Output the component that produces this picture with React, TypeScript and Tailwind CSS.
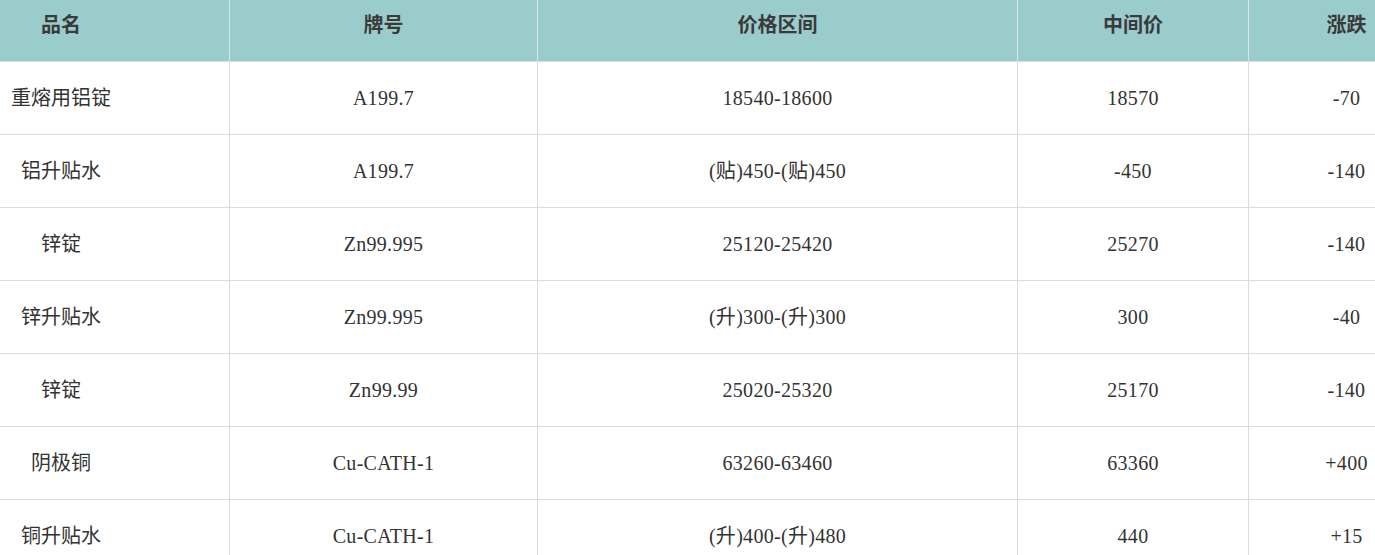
const rows = [
  ["重熔用铝锭", "A199.7", "18540-18600", "18570", "-70"],
  ["铝升贴水", "A199.7", "(贴)450-(贴)450", "-450", "-140"],
  ["锌锭", "Zn99.995", "25120-25420", "25270", "-140"],
  ["锌升贴水", "Zn99.995", "(升)300-(升)300", "300", "-40"],
  ["锌锭", "Zn99.99", "25020-25320", "25170", "-140"],
  ["阴极铜", "Cu-CATH-1", "63260-63460", "63360", "+400"],
  ["铜升贴水", "Cu-CATH-1", "(升)400-(升)480", "440", "+15"],
];

const cols = "grid grid-cols-[230px_308px_480px_231px_195px] w-[1444px]";

const App = () => {
  return (
    <div
      className="w-[1375px] h-[555px] overflow-hidden bg-white text-[20px] text-[#333]"
      style={{ fontFamily: '"Liberation Serif", "Noto Sans CJK SC", serif' }}
    >
      {/* HEADER */}
      <div className={`${cols} h-[62px] bg-[#9acccc] border-b border-[#dcdcdc] font-bold text-[#3a3a3a]`}>
        {["品名", "牌号", "价格区间", "中间价", "涨跌"].map((h, i) => (
          <div
            key={h}
            className={`flex ${i === 0 ? "justify-start" : "justify-center"} pt-[11px] leading-[28px] ${i < 4 ? "border-r border-[#d8e8e8]" : ""}`}
          >
            <span className={i === 0 ? "w-[122px] text-center" : ""}>{h}</span>
          </div>
        ))}
      </div>

      {/* BODY */}
      {rows.map((r, ri) => (
        <div key={ri} className={`${cols} h-[73px] border-b border-[#dcdcdc]`}>
          {r.map((c, i) => (
            <div
              key={i}
              className={`flex items-center ${i === 0 ? "justify-start" : "justify-center"} ${i < 4 ? "border-r border-[#dcdcdc]" : ""}`}
            >
              <span className={i === 0 ? "w-[122px] text-center" : "tracking-[0.3px]"}>{c}</span>
            </div>
          ))}
        </div>
      ))}
    </div>
  );
};

export default App;
